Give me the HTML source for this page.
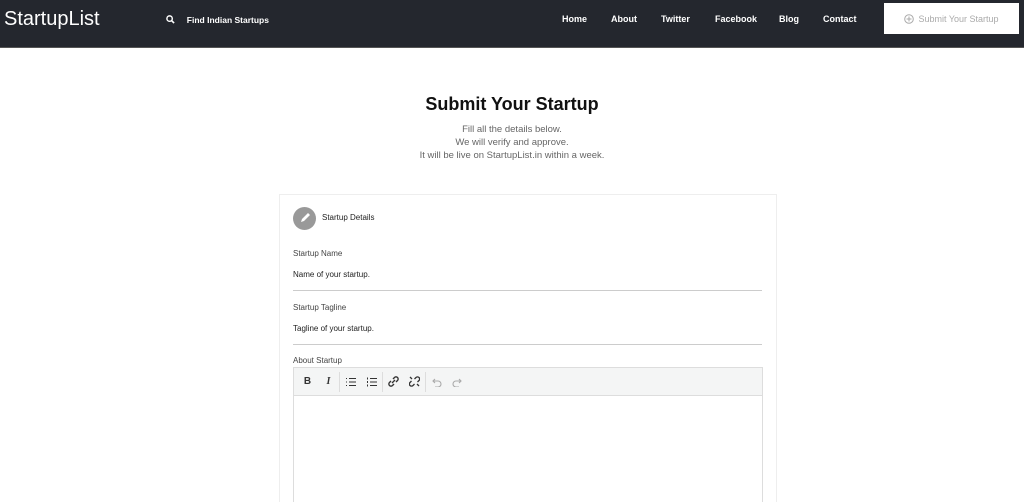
<!DOCTYPE html>
<html><head><meta charset="utf-8"><style>
*{box-sizing:border-box;margin:0;padding:0}
html,body{width:1024px;height:502px;overflow:hidden}
body{background:#fff;font-family:"Liberation Sans",sans-serif;position:relative}
.hdr{position:absolute;left:0;top:0;width:1024px;height:48px;background:#24272e;border-bottom:1px solid #555}
.logo{position:absolute;left:4px;top:8px;color:#fff;font-size:20px}
.srch{position:absolute;left:166px;top:15px;color:#fff;font-size:8.5px;font-weight:bold}
.nav a{position:absolute;top:14px;color:#fff;font-size:9px;font-weight:bold;text-decoration:none}
.btn{position:absolute;left:884px;top:3px;width:135px;height:31px;background:#fff;color:#aaa;font-size:9px;display:flex;align-items:center;justify-content:center;gap:4px}
h1{position:absolute;top:94px;width:1024px;text-align:center;font-size:18px;color:#111}
.sub{position:absolute;top:123px;width:1024px;text-align:center;font-size:9.5px;color:#666;line-height:13px}
.card{position:absolute;left:279px;top:194px;width:498px;height:320px;border:1px solid #eee}
.ic{position:absolute;left:293px;top:207px;width:23px;height:23px;border-radius:50%;background:#999}
.t{position:absolute;font-size:8px;color:#444}
.v{position:absolute;font-size:8px;color:#222}
.ln{position:absolute;left:293px;width:469px;height:1px;background:#ccc}
.ed{position:absolute;left:293px;top:367px;width:470px;height:140px;border:1px solid #ddd}
.tb{height:28px;background:#f4f5f5;border-bottom:1px solid #ddd;display:flex;align-items:center;padding-left:3px;font-size:10px;color:#333}
.tb span{width:21px;display:flex;justify-content:center;align-items:center}
.sep{width:1px!important;height:20px;background:#ddd}
</style></head><body>
<div class="hdr">
<div class="logo">StartupList</div>
<div class="srch"><svg width="9" height="9" viewBox="0 0 10 10" style="vertical-align:-1px"><circle cx="4" cy="4" r="3" stroke="#fff" stroke-width="1.6" fill="none"/><path d="M6 6l3 3" stroke="#fff" stroke-width="1.8"/></svg>&nbsp;&nbsp;&nbsp;&nbsp;&nbsp;Find Indian Startups</div>
<div class="nav"><a style="left:562px">Home</a><a style="left:611px">About</a><a style="left:661px">Twitter</a><a style="left:715px">Facebook</a><a style="left:779px">Blog</a><a style="left:823px">Contact</a></div>
<div class="btn"><svg width="10" height="10" viewBox="0 0 10 10"><circle cx="5" cy="5" r="4.3" stroke="#aaa" fill="none"/><path d="M5 2.5v5M2.5 5h5" stroke="#aaa"/></svg>Submit Your Startup</div>
</div>
<h1>Submit Your Startup</h1>
<div class="sub">Fill all the details below.<br>We will verify and approve.<br>It will be live on StartupList.in within a week.</div>
<div class="card"></div>
<div class="ic"><svg width="23" height="23" viewBox="0 0 23 23"><path d="M8 15l1-3 6-6 2 2-6 6z" fill="#fff"/></svg></div>
<div class="v" style="left:322px;top:213px">Startup Details</div>
<div class="t" style="left:293px;top:249px">Startup Name</div>
<div class="v" style="left:293px;top:270px">Name of your startup.</div>
<div class="ln" style="top:290px"></div>
<div class="t" style="left:293px;top:303px">Startup Tagline</div>
<div class="v" style="left:293px;top:324px">Tagline of your startup.</div>
<div class="ln" style="top:344px"></div>
<div class="t" style="left:293px;top:356px">About Startup</div>
<div class="ed"><div class="tb">
<span><b>B</b></span><span><i style="font-family:'Liberation Serif';font-weight:bold">I</i></span><span class="sep"></span>
<span><svg width="11" height="10" viewBox="0 0 11 10" stroke="#333" stroke-width="1"><path d="M4 1.5h7M4 5h7M4 8.5h7"/><path d="M1 1.5h1M1 5h1M1 8.5h1"/></svg></span>
<span><svg width="11" height="10" viewBox="0 0 11 10" stroke="#333" stroke-width="1"><path d="M4 1.5h7M4 5h7M4 8.5h7M1.5 0.5v2M1.5 4v2M1.5 7.5v2"/></svg></span><span class="sep"></span>
<span><svg width="11" height="11" viewBox="0 0 11 11" stroke="#333" stroke-width="1.4" fill="none"><path d="M5 3l1.5-1.5a2 2 0 0 1 3 3L8 6M6 8L4.5 9.5a2 2 0 0 1-3-3L3 5M4 7l3-3"/></svg></span>
<span><svg width="11" height="11" viewBox="0 0 11 11" stroke="#333" stroke-width="1.3" fill="none"><path d="M5.5 3l1.5-1.5a2 2 0 0 1 3 3L8.5 6M5.5 8L4 9.5a2 2 0 0 1-3-3L2.5 5M1 1l2 2M8 8l2 2"/></svg></span><span class="sep"></span>
<span><svg width="11" height="10" viewBox="0 0 11 10" stroke="#aaa" stroke-width="1.1" fill="none"><path d="M2 4h5a3 3 0 0 1 0 6H4M4 2L2 4l2 2"/></svg></span>
<span><svg width="11" height="10" viewBox="0 0 11 10" stroke="#aaa" stroke-width="1.1" fill="none"><path d="M9 4H4a3 3 0 0 0 0 6h3M7 2l2 2-2 2"/></svg></span>
</div></div>
</body></html>
